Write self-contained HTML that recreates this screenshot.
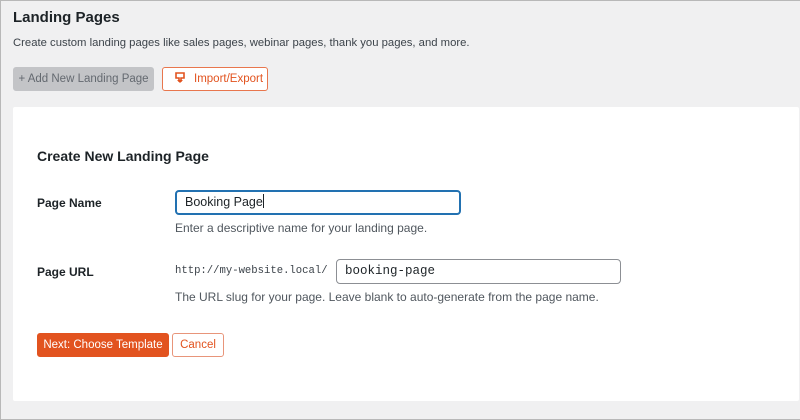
<!DOCTYPE html>
<html><head><style>
*{box-sizing:border-box;margin:0;padding:0}
body{width:800px;height:420px;overflow:hidden;background:#f0f0f1;font-family:"Liberation Sans",sans-serif;color:#1d2327;position:relative}
.frame{position:absolute;inset:0;border:1px solid #b8b8b8;border-right:none;pointer-events:none}
.abs{position:absolute;white-space:nowrap}
h1{font-size:15px;font-weight:bold}
.btn{position:absolute;height:24px;border-radius:3px;font-size:11.5px;line-height:22px;text-align:center;white-space:nowrap}
.card{position:absolute;left:13px;top:107px;width:786px;height:294px;background:#fff;border-radius:2px}
.lbl{font-size:12px;font-weight:bold}
.help{font-size:12px;color:#50575e}
.inp{position:absolute;background:#fff;border-radius:4px;font-size:12.5px;padding-left:8px}
.mono{font-family:"Liberation Mono",monospace}
</style></head><body>
<div class="frame"></div>
<h1 class="abs" style="left:13px;top:9px">Landing Pages</h1>
<div class="abs" style="left:13px;top:37px;font-size:11.3px;color:#3c434a">Create custom landing pages like sales pages, webinar pages, thank you pages, and more.</div>
<div class="btn" style="left:13px;top:67px;width:141px;background:#c3c4c7;color:#646970;border:1px solid #c3c4c7">+ Add New Landing Page</div>
<div class="btn" style="left:162px;top:67px;width:106px;background:#fff;color:#e2531f;border:1px solid #e8764d;text-align:left;padding-left:12px">
<svg width="10" height="12" viewBox="0 0 10 12" style="vertical-align:-2px;margin-right:9px"><path d="M1 1h8v5H6v3H4V6H1z" fill="none" stroke="#e2531f" stroke-width="1.6"/><path d="M2 8l3 3 3-3" fill="#e2531f"/></svg>Import/Export</div>
<div class="card"></div>
<div class="abs" style="left:37px;top:148px;font-size:14px;font-weight:bold">Create New Landing Page</div>
<div class="abs lbl" style="left:37px;top:196px">Page Name</div>
<div class="inp" style="left:175px;top:190px;width:286px;height:25px;border:2px solid #2271b1;line-height:21px">Booking Page<span style="display:inline-block;width:1px;height:14px;background:#1d2327;vertical-align:-2px"></span></div>
<div class="abs help" style="left:175px;top:221px">Enter a descriptive name for your landing page.</div>
<div class="abs lbl" style="left:37px;top:265px">Page URL</div>
<div class="abs mono" style="left:175px;top:265px;font-size:10.6px;color:#3c434a">http://my-website.local/</div>
<div class="inp mono" style="left:336px;top:259px;width:285px;height:25px;border:1px solid #8c8f94;line-height:23px;font-size:12.5px">booking-page</div>
<div class="abs help" style="left:175px;top:290px">The URL slug for your page. Leave blank to auto-generate from the page name.</div>
<div class="btn" style="left:37px;top:333px;width:132px;background:#e2531f;color:#fff;border:1px solid #e2531f">Next: Choose Template</div>
<div class="btn" style="left:172px;top:333px;width:52px;background:#fff;color:#e2531f;border:1px solid #e8957a">Cancel</div>
</body></html>
